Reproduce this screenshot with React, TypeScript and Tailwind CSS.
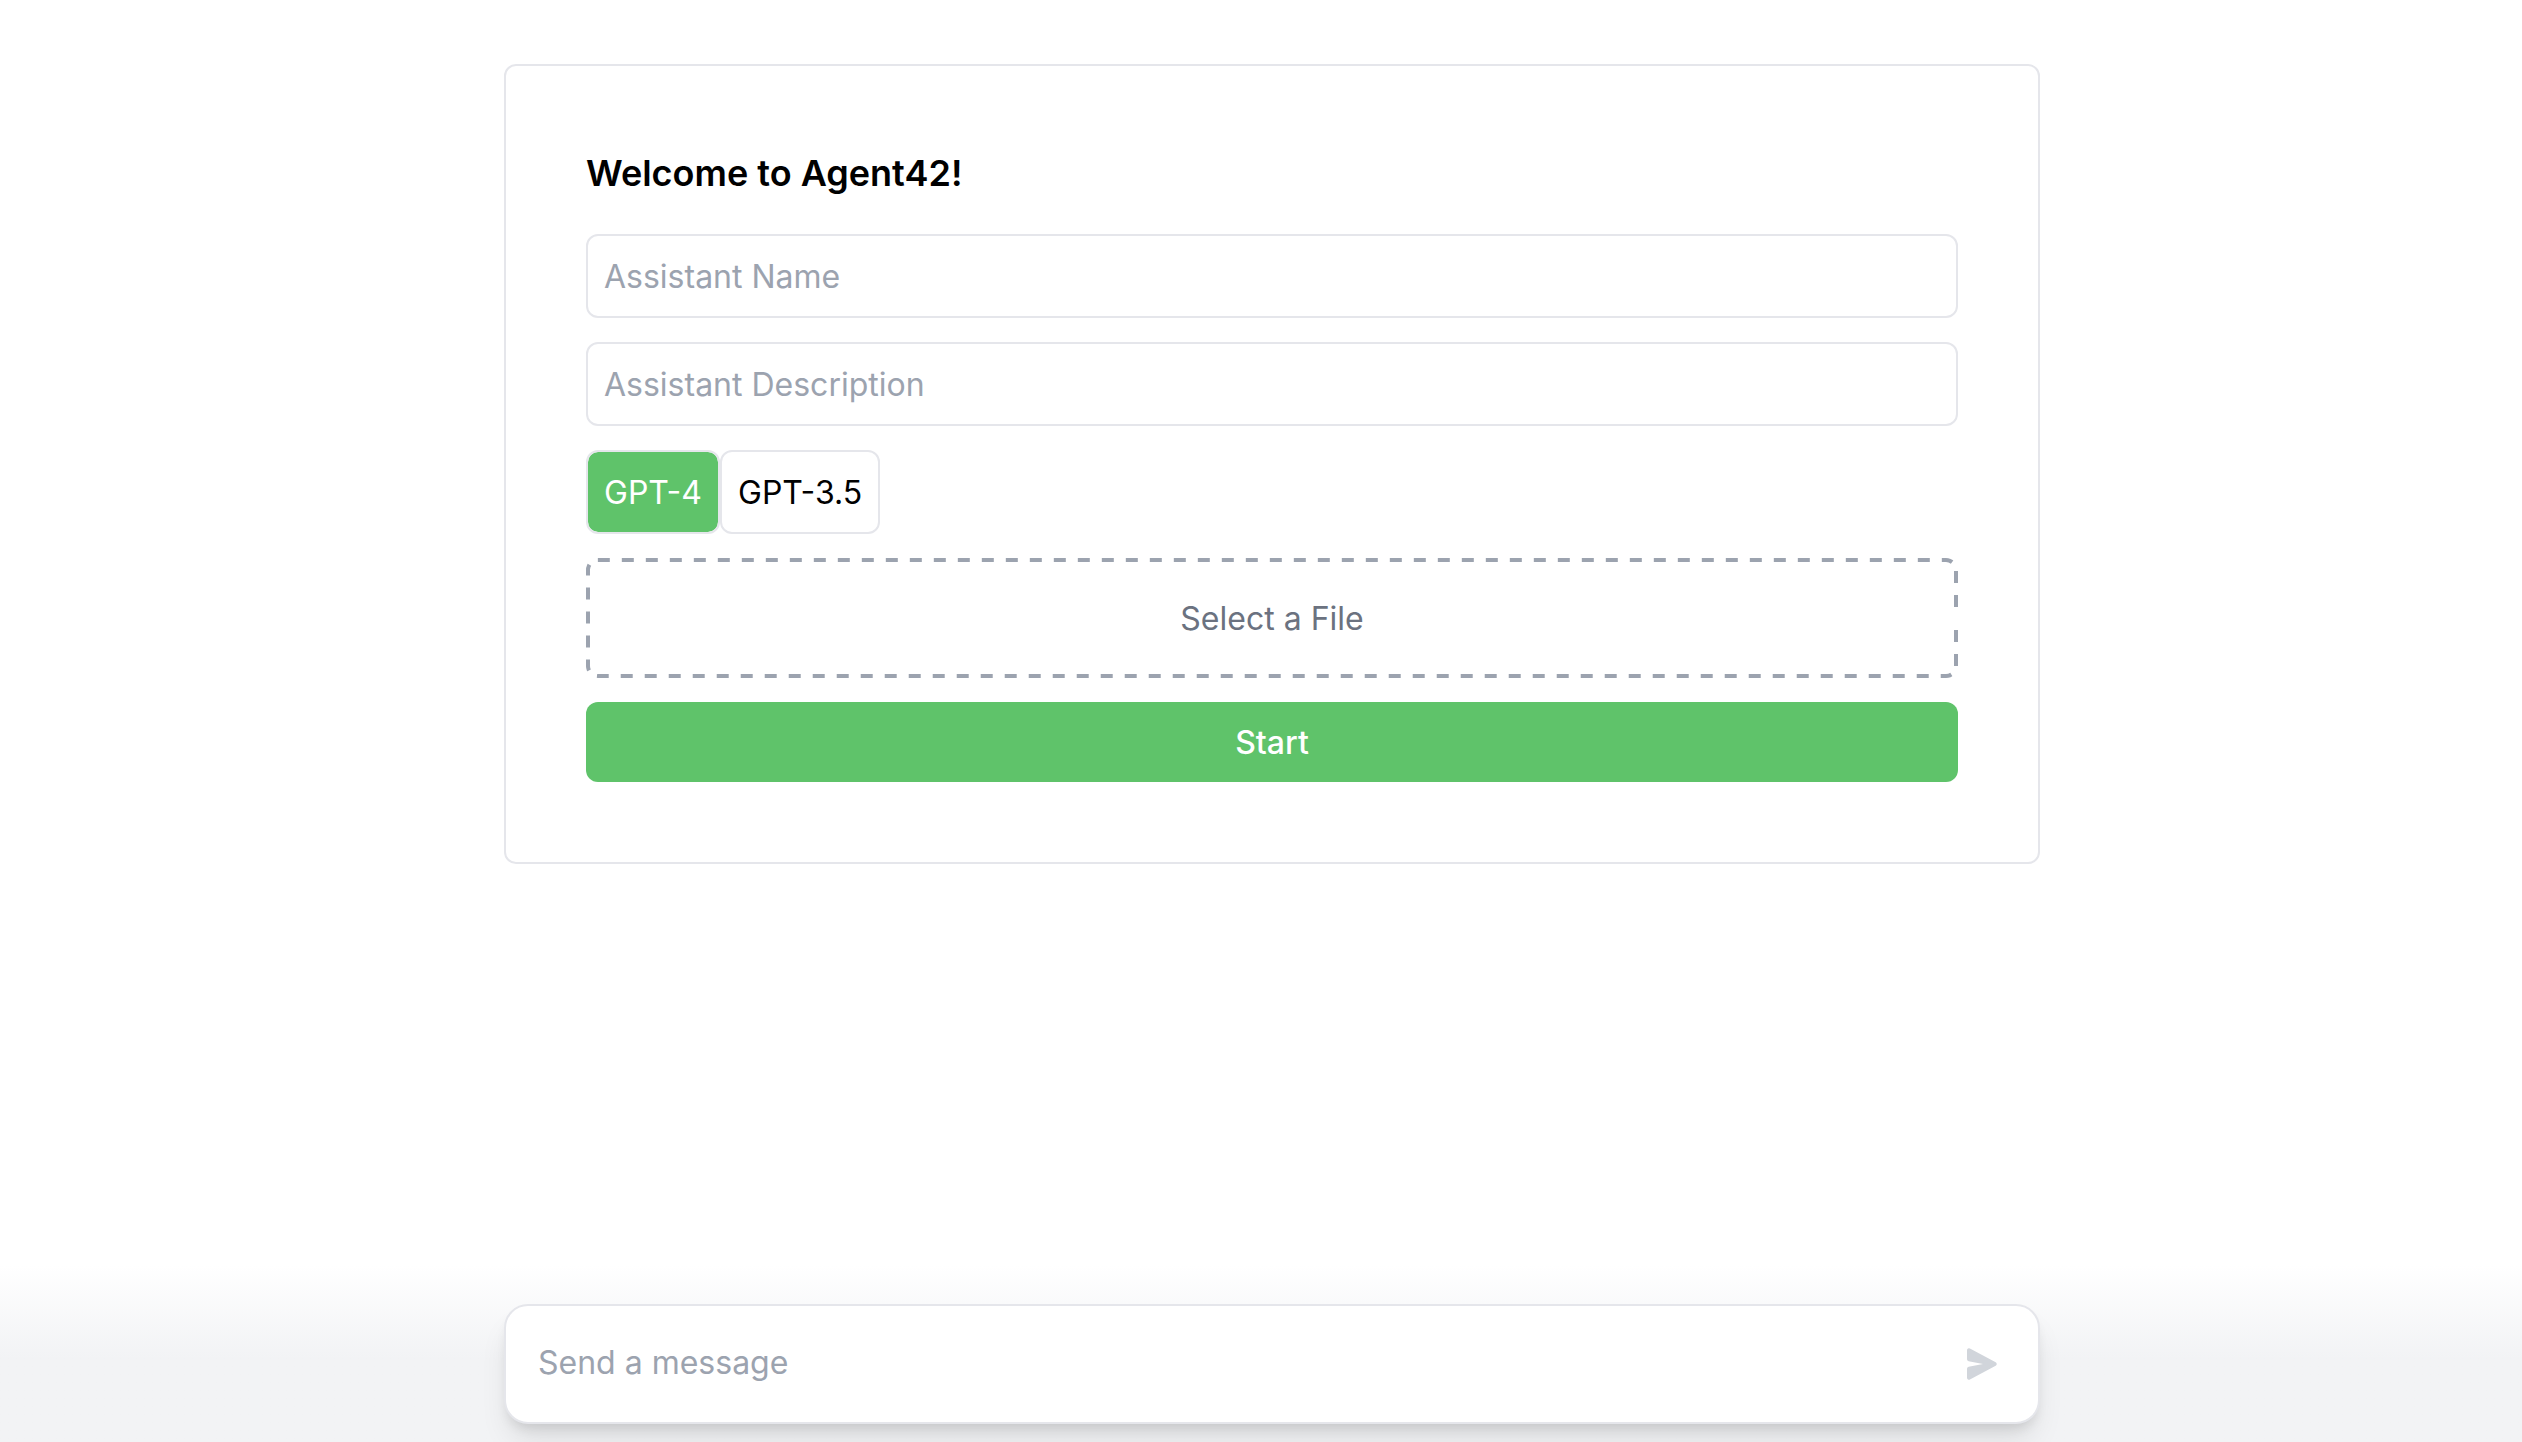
import React from "react";

function Field({ placeholder }: { placeholder: string }) {
  return (
    <input
      type="text"
      placeholder={placeholder}
      className="h-[84px] w-full rounded-xl border-2 border-[#e5e6eb] bg-transparent p-4 text-[32px] leading-[48px] text-black outline-none placeholder:text-[#9ca3af]"
    />
  );
}

function DashedOutline() {
  return (
    <svg
      className="pointer-events-none absolute inset-0 h-[120px] w-[1372px] overflow-hidden rounded-xl"
      viewBox="0 0 1372 120"
      fill="none"
      aria-hidden="true"
    >
      <path
        d="M1372 72V108A12 12 0 0 1 1360 120H12A12 12 0 0 1 0 108V12A12 12 0 0 1 12 0H1360A12 12 0 0 1 1372 12V60"
        stroke="#9ca3af"
        strokeWidth="8"
        strokeDasharray="12 12"
      />
    </svg>
  );
}

function SetupCard() {
  return (
    <section className="flex w-[1536px] flex-col gap-6 rounded-xl border-2 border-[#e5e6eb] p-20">
      <h1 className="mb-2.5 h-[54px] text-[36px] leading-[54px] font-semibold">
        Welcome to Agent42!
      </h1>
      <Field placeholder="Assistant Name" />
      <Field placeholder="Assistant Description" />
      <div className="flex">
        <button className="h-[84px] rounded-xl border-2 border-[#e5e6eb] bg-[#5fc36a] bg-clip-padding px-4 pt-0.5 text-white">
          GPT-4
        </button>
        <button className="h-[84px] rounded-xl border-2 border-[#e5e6eb] px-4 pt-0.5">GPT-3.5</button>
      </div>
      <div className="relative flex h-[120px] items-center justify-center pt-0.5 text-[#6b7280]">
        <DashedOutline />
        <span>Select a File</span>
      </div>
      <button className="h-20 rounded-xl bg-[#5fc36a] pt-0.5 font-medium text-white">Start</button>
    </section>
  );
}

function MessageBar() {
  return (
    <footer className="flex h-[186px] justify-center bg-linear-to-b from-[#f2f3f5]/0 from-5% to-[#f2f3f5] to-55% pt-12 pl-[22px]">
      <form className="flex h-[120px] w-[1536px] items-center justify-between rounded-3xl border-2 border-[#e5e6eb] bg-white pr-10 pl-8 shadow-[0_20px_30px_-6px_rgba(0,0,0,0.1),0_8px_12px_-4px_rgba(0,0,0,0.1)]">
        <input
          type="text"
          placeholder="Send a message"
          className="mb-0.5 h-12 flex-1 bg-transparent leading-[48px] outline-none placeholder:text-[#9ca3af]"
        />
        <button type="button" aria-label="Send" className="text-[#d1d5db]">
          <svg viewBox="0 0 16 16" className="size-8" fill="currentColor">
            <path d="M.5 1.163A1 1 0 0 1 1.97.28l12.868 6.837a1 1 0 0 1 0 1.766L1.969 15.72A1 1 0 0 1 .5 14.836V10.33a1 1 0 0 1 .816-.983L8.5 8 1.316 6.653A1 1 0 0 1 .5 5.67V1.163Z" />
          </svg>
        </button>
      </form>
    </footer>
  );
}

export default function App() {
  return (
    <div className="flex h-[1442px] w-full flex-col justify-between overflow-hidden bg-white font-['Inter',sans-serif] text-[32px] leading-[48px] text-black">
      <main className="flex justify-center pt-16 pl-[22px]">
        <SetupCard />
      </main>
      <MessageBar />
    </div>
  );
}
